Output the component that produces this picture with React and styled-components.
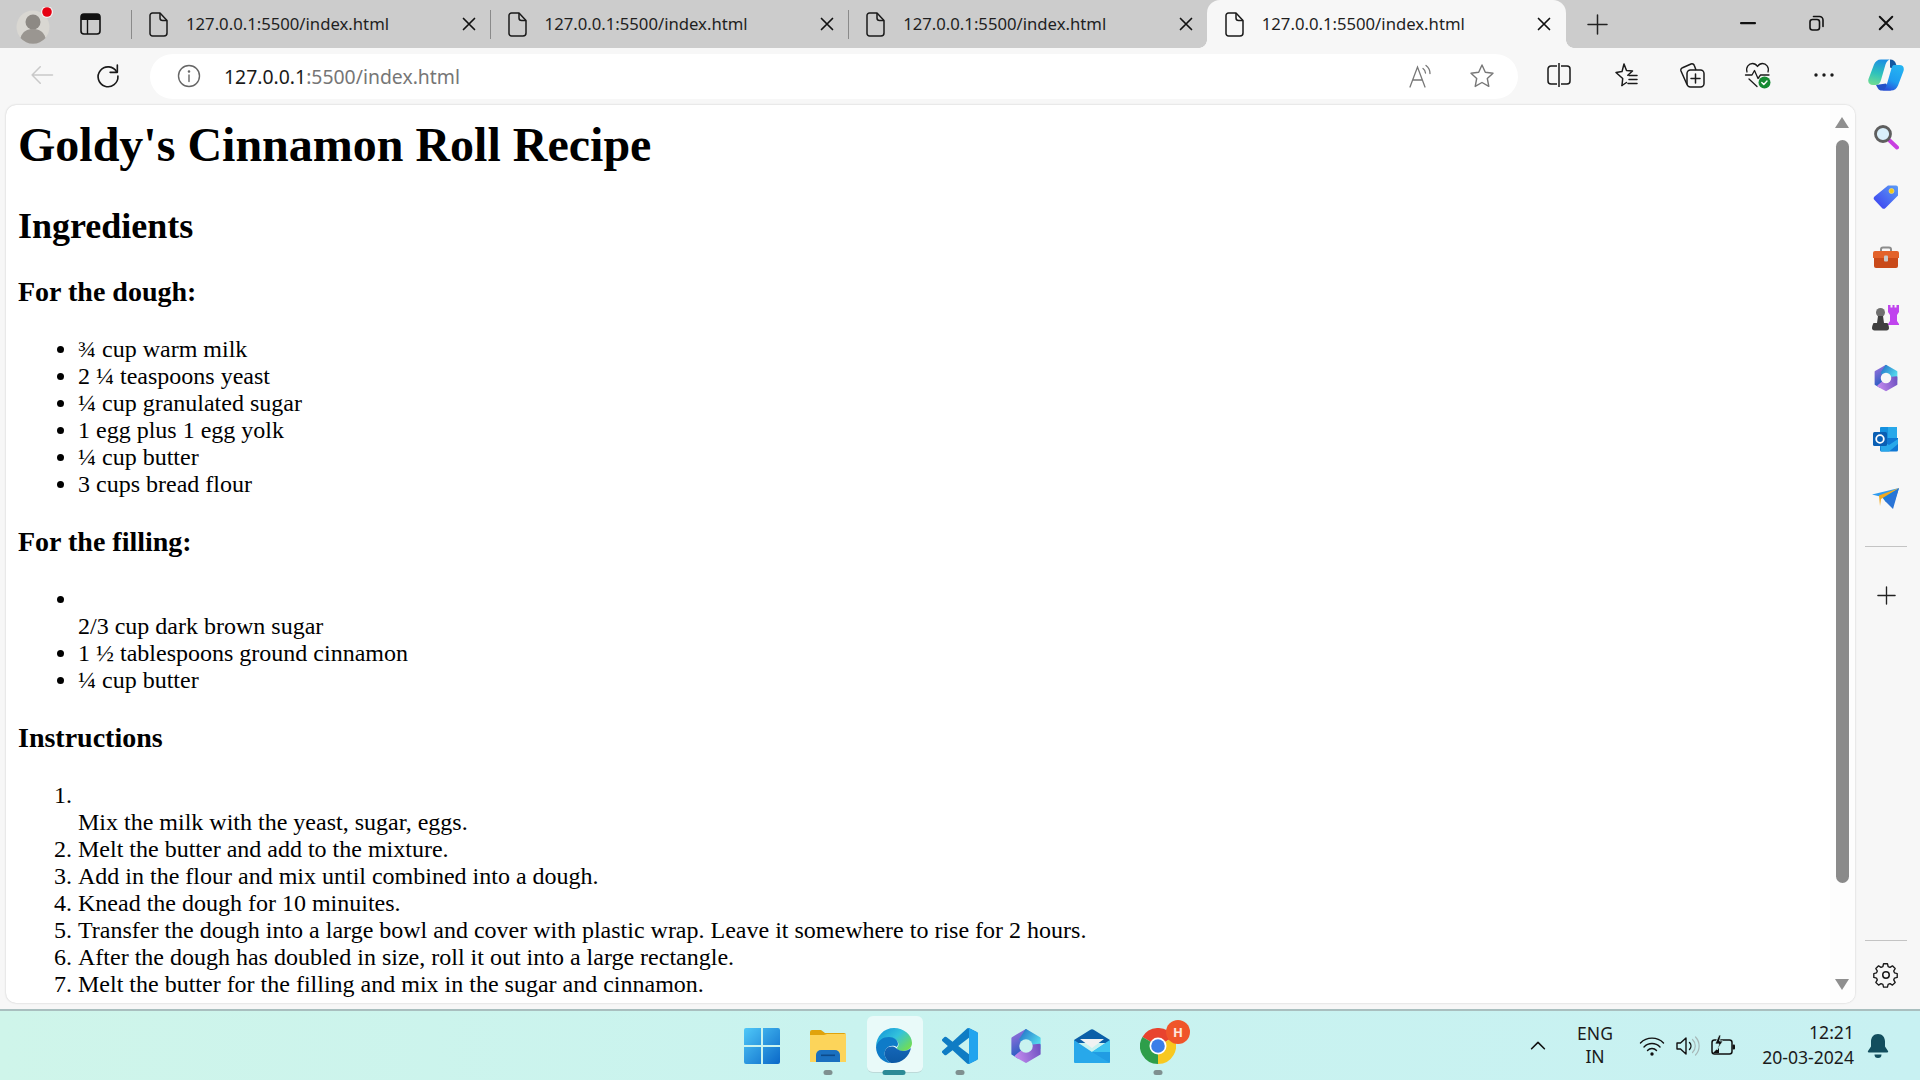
import React from 'react';
import styled, { createGlobalStyle, css } from 'styled-components';

const GlobalStyle = createGlobalStyle`
  html, body {
    margin: 0;
    padding: 0;
    width: 1920px;
    height: 1080px;
    overflow: hidden;
    background: #f7f7f7;
  }
`;

const uiFont = `"Noto Sans", "Open Sans", sans-serif`;

const Screen = styled.div`
  width: 1920px;
  height: 1080px;
  display: flex;
  flex-direction: column;
  overflow: hidden;
  font-family: ${uiFont};
`;

/* ---------- tab strip ---------- */

const TabStrip = styled.div`
  height: 48px;
  flex: none;
  background: #cccccc;
  display: flex;
  align-items: stretch;
`;

const ProfileSlot = styled.div`
  width: 50px;
  flex: none;
  padding: 7px 0 0 16px;
`;

const TabActionSlot = styled.div`
  width: 49px;
  flex: none;
  margin-right: 16px;
  display: flex;
  align-items: center;
  justify-content: center;
`;

const activeTab = css`
  background: #f7f7f7;
  border-radius: 13px 13px 0 0;

  &::before,
  &::after {
    content: '';
    position: absolute;
    bottom: 0;
    width: 8px;
    height: 8px;
  }

  &::before {
    left: -8px;
    background: radial-gradient(circle at 0 0, transparent 7.5px, #f7f7f7 8px);
  }

  &::after {
    right: -8px;
    background: radial-gradient(circle at 100% 0, transparent 7.5px, #f7f7f7 8px);
  }
`;

const Tab = styled.div`
  width: ${p => (p.$active ? 359 : 358.6)}px;
  flex: none;
  box-sizing: border-box;
  display: flex;
  align-items: center;
  padding: 0 ${p => (p.$active ? 15 : 14)}px 0 18px;
  color: #1f1f1f;
  position: relative;
  ${p => p.$active && activeTab}
`;

const TabDivider = styled.span`
  position: absolute;
  left: 0;
  top: 10px;
  height: 29px;
  width: 1px;
  background: #8a8a8a;
`;

const TabTitle = styled.span`
  margin-left: 18px;
  flex: 1;
  font-size: 16.7px;
  white-space: nowrap;
  padding-bottom: 2px;
`;

const NewTab = styled.div`
  width: 64px;
  flex: none;
  display: flex;
  align-items: center;
  justify-content: center;
`;

const WindowControls = styled.div`
  margin-left: auto;
  display: flex;
  align-items: center;
`;

const WindowButton = styled.div`
  width: 69px;
  display: flex;
  justify-content: center;
  align-items: center;
  padding-bottom: 2px;
`;

/* ---------- toolbar ---------- */

const Toolbar = styled.div`
  height: 57px;
  flex: none;
  background: #f7f7f7;
  display: flex;
  align-items: center;
  padding-bottom: 4px;
  box-sizing: border-box;
`;

const NavButton = styled.div`
  width: ${p => p.$w}px;
  margin-left: ${p => p.$ml || 0}px;
  flex: none;
  display: flex;
  justify-content: center;
  align-items: center;
`;

const AddressBar = styled.div`
  width: 1368px;
  height: 45px;
  flex: none;
  margin-left: 17px;
  margin-top: 3px;
  background: #ffffff;
  border-radius: 23px;
  display: flex;
  align-items: center;
  padding: 0 6px 0 27px;
  box-sizing: border-box;
`;

const Url = styled.div`
  margin-left: 23px;
  flex: 1;
  font-size: 19.4px;
  color: #767676;
  white-space: nowrap;
`;

const UrlHost = styled.span`
  color: #1a1a1a;
`;

const AddressAction = styled.div`
  width: 61px;
  display: flex;
  justify-content: center;
  align-items: center;
`;

/* ---------- main area ---------- */

const Main = styled.div`
  flex: 1;
  min-height: 0;
  display: flex;
  background: #f7f7f7;
`;

const Viewport = styled.div`
  width: 1849px;
  height: 898px;
  margin-left: 6px;
  flex: none;
  display: flex;
  background: #ffffff;
  border-radius: 10px;
  box-shadow: 0 0 2px rgba(0, 0, 0, 0.22);
  overflow: hidden;
`;

const Page = styled.main`
  flex: 1;
  min-width: 0;
  padding: 12px 12px 0;
  font-family: "Liberation Serif", "Times New Roman", serif;
  color: #000000;
  overflow: hidden;
`;

const Title = styled.h1`
  margin: 0 0 34px;
  font-size: 48px;
  line-height: 55px;
  font-weight: 700;
`;

const Heading = styled.h2`
  margin: 0 0 29px;
  font-size: 36px;
  line-height: 41px;
  font-weight: 700;
`;

const SubHeading = styled.h3`
  margin: 0 0 28px;
  font-size: 28px;
  line-height: 32px;
  font-weight: 700;
`;

const BulletList = styled.ul`
  margin: 0 0 28px;
  padding-left: 60px;
  font-size: 24px;
  line-height: 27px;
`;

const StepList = styled.ol`
  margin: 0;
  padding-left: 60px;
  font-size: 24px;
  line-height: 27px;
  white-space: nowrap;
`;

const ScrollTrack = styled.div`
  width: 25px;
  flex: none;
  background: #fdfdfd;
  display: flex;
  flex-direction: column;
  align-items: center;
  padding: 12px 6px 12px 5px;
  box-sizing: border-box;
`;

const ScrollThumb = styled.div`
  width: 13px;
  height: 743px;
  margin: 12px 0 96px;
  border-radius: 7px;
  background: #8a8a8a;
  flex: none;
`;

const ScrollArrow = styled.div`
  width: 0;
  height: 0;
  flex: none;
  border-left: 7px solid transparent;
  border-right: 7px solid transparent;
  border-bottom: ${p => (p.$down ? '0' : '11px solid #8f8f8f')};
  border-top: ${p => (p.$down ? '11px solid #8f8f8f' : '0')};
`;

/* ---------- sidebar ---------- */

const Sidebar = styled.aside`
  width: 65px;
  flex: none;
  display: flex;
  flex-direction: column;
  align-items: center;
  padding: 2px 3px 4px 0;
  box-sizing: border-box;
`;

const SideSlot = styled.div`
  height: 60.3px;
  flex: none;
  display: flex;
  align-items: center;
  justify-content: center;
`;

const SideRule = styled.div`
  width: 42px;
  height: 1px;
  flex: none;
  background: #c4c4c4;
  margin: ${p => p.$m};
`;

const SideSpacer = styled.div`
  flex: 1;
`;

/* ---------- taskbar ---------- */

const Taskbar = styled.footer`
  height: 71px;
  flex: none;
  box-sizing: border-box;
  border-top: 2px solid #a9bfbf;
  background: linear-gradient(90deg, #cff5ea 0%, #c9f3ef 45%, #c8f1f2 100%);
  display: grid;
  grid-template-columns: 1fr auto 1fr;
  align-items: center;
`;

const TaskIcons = styled.div`
  grid-column: 2;
  display: flex;
  height: 100%;
`;

const TaskSlot = styled.div`
  width: 66px;
  position: relative;
  isolation: isolate;
  display: flex;
  justify-content: center;
  align-items: center;
`;

const ActiveBox = styled.div`
  position: absolute;
  z-index: -1;
  left: 6px;
  top: 5px;
  width: 56px;
  height: 57px;
  box-sizing: border-box;
  border-radius: 6px;
  background: rgba(255, 255, 255, 0.6);
  border-bottom: 1px solid rgba(120, 170, 170, 0.4);
`;

const RunDot = styled.div`
  position: absolute;
  bottom: 5px;
  left: 50%;
  transform: translateX(-50%);
  height: 5px;
  border-radius: 3px;
  width: ${p => (p.$active ? 23 : 9)}px;
  background: ${p => (p.$active ? '#2b8a96' : '#7f9090')};
`;

const Badge = styled.div`
  position: absolute;
  top: 9px;
  left: 41px;
  width: 24px;
  height: 24px;
  border-radius: 50%;
  background: #f0552a;
  color: #ffe6dc;
  font-size: 13px;
  font-weight: 700;
  display: flex;
  align-items: center;
  justify-content: center;
`;

const Tray = styled.div`
  grid-column: 3;
  display: flex;
  align-items: center;
  justify-content: flex-end;
  color: #1b1b1b;
  padding-right: 31px;
`;

const LangBlock = styled.div`
  width: 70px;
  margin-left: 11px;
  margin-bottom: 2px;
  text-align: center;
  font-size: 17.5px;
  line-height: 23px;
`;

const TrayIcon = styled.div`
  width: ${p => p.$w}px;
  display: flex;
  justify-content: center;
`;

const Clock = styled.div`
  width: 110px;
  margin-bottom: 1px;
  text-align: right;
  font-size: 17.6px;
  line-height: 25px;
  white-space: nowrap;
`;

const BellWrap = styled.div`
  margin-left: 13px;
  display: flex;
`;

/* ---------- icons ---------- */

const Line = ({ size = 24, children, color = '#1a1a1a', sw = 1.6 }) => (
  <svg width={size} height={size} viewBox="0 0 24 24" fill="none" stroke={color} strokeWidth={sw} strokeLinecap="round" strokeLinejoin="round">
    {children}
  </svg>
);

const Avatar = () => (
  <svg width="42" height="40" viewBox="0 0 42 40">
    <circle cx="17" cy="20" r="16.5" fill="#d9d7d2" />
    <circle cx="17" cy="15" r="7.5" fill="#8d8984" />
    <path d="M4.5 31c2-7 7-9 12.5-9s10.500 2 12.500 9a16.500 16.500 0 0 1-25 0z" fill="#9a9691" />
    <circle cx="31" cy="5" r="6" fill="#f2f2f2" />
    <circle cx="31" cy="5" r="4.800" fill="#e60012" />
  </svg>
);

const TabActionsIcon = () => (
  <svg width="21" height="22" viewBox="0 0 21 22">
    <rect x="1" y="1" width="19" height="20" rx="3" fill="none" stroke="#111" strokeWidth="1.6" />
    <path d="M1 4a3 3 0 0 1 3-3h13a3 3 0 0 1 3 3v3H1z" fill="#111" />
    <path d="M7.500 7v14" stroke="#111" strokeWidth="1.4" />
  </svg>
);

const FileIcon = () => (
  <svg width="19" height="25" viewBox="0 0 19 25" fill="none" stroke="#1a1a1a" strokeWidth="1.500" strokeLinejoin="round">
    <path d="M3.500 1h7.500l7 7.500V21a3 3 0 0 1-3 3H3.500a2.500 2.500 0 0 1-2.500-2.500v-18A2.500 2.500 0 0 1 3.500 1z" />
    <path d="M11 1v5a2.500 2.500 0 0 0 2.500 2.500H18" />
  </svg>
);

const CloseIcon = ({ size = 14, sw = 1.7 }) => (
  <svg width={size} height={size} viewBox="0 0 14 14" stroke="#111" strokeWidth={sw} strokeLinecap="round">
    <path d="M1.500 1.500l11 11M12.500 1.500l-11 11" />
  </svg>
);

const PlusIcon = ({ size = 21 }) => (
  <svg width={size} height={size} viewBox="0 0 21 21" stroke="#222" strokeWidth="1.500" strokeLinecap="round">
    <path d="M10.500 1v19M1 10.500h19" />
  </svg>
);

const MinimizeIcon = () => (
  <svg width="16" height="3" viewBox="0 0 16 3"><rect width="16" height="2.200" rx="1" fill="#111" /></svg>
);

const RestoreIcon = () => (
  <svg width="15" height="16" viewBox="0 0 15 16" fill="none" stroke="#111" strokeWidth="1.600">
    <rect x="1" y="4.500" width="9.500" height="10.500" rx="2.500" />
    <path d="M4.500 1.500h6a3.500 3.500 0 0 1 3.500 3.500v6.500" strokeLinecap="round" />
  </svg>
);

const BackIcon = () => (
  <Line size={28} color="#c9c9c9" sw={1.300}>
    <path d="M21 12H3.500M10.500 5l-7 7 7 7" />
  </Line>
);

const RefreshIcon = () => (
  <Line size={28} color="#1a1a1a" sw={1.400}>
    <path d="M19.500 9.500A8.500 8.500 0 1 0 20.500 13" />
    <path d="M20 3.500v6.200h-6.200" />
  </Line>
);

const InfoIcon = () => (
  <svg width="24" height="24" viewBox="0 0 24 24" fill="none" stroke="#666" strokeWidth="1.400">
    <circle cx="12" cy="12" r="10.500" />
    <path d="M12 11v6.500" strokeLinecap="round" />
    <circle cx="12" cy="7.500" r="0.600" fill="#666" />
  </svg>
);

const ReadAloudIcon = () => (
  <svg width="26" height="26" viewBox="0 0 26 26" fill="none" stroke="#777" strokeWidth="1.300" strokeLinecap="round">
    <path d="M2 24L9.500 4l7.500 20M5 17h9" />
    <path d="M15 5.500a6 6 0 0 1 2.500 4.500M18 2.500a10 10 0 0 1 4 8" />
  </svg>
);

const StarIcon = () => (
  <svg width="26" height="26" viewBox="0 0 26 26" fill="none" stroke="#777" strokeWidth="1.400" strokeLinejoin="round">
    <path d="M13 2l3.300 7.300 7.700.9-5.700 5.300 1.500 7.900L13 19.500l-6.800 3.900 1.500-7.900L2 10.200l7.700-.9z" />
  </svg>
);

const SplitIcon = () => (
  <svg width="24" height="26" viewBox="0 0 24 26" fill="none" stroke="#1a1a1a" strokeWidth="1.500">
    <path d="M10 4H4a3 3 0 0 0-3 3v12a3 3 0 0 0 3 3h6M14 4h6a3 3 0 0 1 3 3v12a3 3 0 0 1-3 3h-6" />
    <path d="M12 1v24" />
  </svg>
);

const FavoritesIcon = () => (
  <svg width="26" height="26" viewBox="0 0 26 26" fill="none" stroke="#1a1a1a" strokeWidth="1.500" strokeLinejoin="round" strokeLinecap="round">
    <path d="M11 2l2.500 6.500 6 .5-4.700 4.200M9 23.500l.7-7-6.700-6 6-.9L11 2" />
    <path d="M9 23.500l4.500-3M16 13.500h8M16 17.500h8M15 21.500h9" />
  </svg>
);

const CollectionsIcon = () => (
  <svg width="26" height="28" viewBox="0 0 26 28" fill="none" stroke="#1a1a1a" strokeWidth="1.500" strokeLinejoin="round">
    <rect x="8" y="9" width="17" height="17" rx="3.500" />
    <path d="M16.500 13v9M12 17.500h9" strokeLinecap="round" />
    <path d="M8 23.500L2 10a2.500 2.500 0 0 1 1.500-3.300L12 3a2.500 2.500 0 0 1 3.300 1.500L17 9" />
  </svg>
);

const HealthIcon = () => (
  <svg width="28" height="28" viewBox="0 0 28 28" fill="none" stroke="#1a1a1a" strokeWidth="1.300" strokeLinejoin="round" strokeLinecap="round">
    <path d="M3 11C1.500 6 5 2.500 8.500 2.500c2.500 0 4 1.500 5 3 1-1.500 2.500-3 5-3C22 2.500 25.500 6 24 11" />
    <path d="M1.500 14H8l2.500-4.500 3.500 8 2.500-3.500H25" />
    <path d="M5 18l8 7.500" />
    <circle cx="20.500" cy="21.500" r="6" fill="#158a32" stroke="none" />
    <path d="M17.800 21.500l2 2 3.200-3.500" stroke="#fff" strokeWidth="1.400" />
  </svg>
);

const DotsIcon = () => (
  <svg width="20" height="4" viewBox="0 0 20 4" fill="#1a1a1a">
    <circle cx="2" cy="2" r="1.700" /><circle cx="10" cy="2" r="1.700" /><circle cx="18" cy="2" r="1.700" />
  </svg>
);

const CopilotIcon = () => (
  <svg width="36" height="32" viewBox="0 0 36 32">
    <defs>
      <linearGradient id="copA" x1="0.500" y1="0" x2="0.300" y2="1">
        <stop offset="0" stopColor="#1d8fe2" />
        <stop offset="0.550" stopColor="#2fc2bb" />
        <stop offset="1" stopColor="#6fdc92" />
      </linearGradient>
      <linearGradient id="copB" x1="0.700" y1="0" x2="0.300" y2="1">
        <stop offset="0" stopColor="#25b4f2" />
        <stop offset="0.600" stopColor="#1e9cf0" />
        <stop offset="1" stopColor="#2a4fd8" />
      </linearGradient>
    </defs>
    <path d="M22 .5c3.500 0 5 1.500 6 4.500l2 6.500-8-3z" fill="#14579f" />
    <path d="M13 .5h10c-3 0-4.500 2-5.500 5L13 21c-1 3.500-2.500 5-5.500 5H5C1.500 26-.5 23.500.5 20L6 5.500C7.200 2.500 9.500.5 13 .5z" fill="url(#copA)" />
    <path d="M8 26l2 3.500c1 1.500 2 2 3.500 2H23l-5-7z" fill="#2450c8" />
    <path d="M26 6h5.500c3.500 0 5 2.500 4 6L30 26.500c-1.200 3-3.500 5-7 5H13c3 0 4.500-2 5.500-5L23 11c1-3.500 1.500-5 3-5z" fill="url(#copB)" />
  </svg>
);

const SearchSideIcon = () => (
  <svg width="26" height="26" viewBox="0 0 26 26">
    <path d="M15 15l9 8.500" stroke="#c83fe0" strokeWidth="4" strokeLinecap="round" />
    <circle cx="10" cy="10" r="7.500" fill="#d9effb" stroke="#5e5e5e" strokeWidth="2.800" />
  </svg>
);

const TagIcon = () => (
  <svg width="26" height="26" viewBox="0 0 26 26">
    <defs>
      <linearGradient id="tagG" x1="1" y1="0" x2="0" y2="1">
        <stop offset="0" stopColor="#5b9df5" />
        <stop offset="1" stopColor="#3b3cf0" />
      </linearGradient>
    </defs>
    <path d="M15 1.500h8a2 2 0 0 1 2 2v8L12.500 24a2.500 2.500 0 0 1-3.500 0L1.500 16a2.500 2.500 0 0 1 0-3.500z" fill="url(#tagG)" />
    <circle cx="18.500" cy="7" r="2.500" fill="#f3c915" stroke="#ecd97a" strokeWidth="0.800" />
  </svg>
);

const ToolboxIcon = () => (
  <svg width="28" height="24" viewBox="0 0 28 24">
    <path d="M9 6V3.500A2 2 0 0 1 11 1.500h6a2 2 0 0 1 2 2V6" fill="none" stroke="#8c8c8c" strokeWidth="2" />
    <path d="M1 7a2 2 0 0 1 2-2h22a2 2 0 0 1 2 2v5H1z" fill="#e3622a" />
    <path d="M2 12h24v8a2 2 0 0 1-2 2H4a2 2 0 0 1-2-2z" fill="#c94a1a" />
    <rect x="12" y="9.500" width="4" height="6" rx="1" fill="#c9c9c9" />
  </svg>
);

const ChessIcon = () => (
  <svg width="28" height="28" viewBox="0 0 28 28">
    <path d="M16 1h2.500v2.500h2V1h2v2.500h2V1h2.500v7l-2 3v6l2 3v1H16v-1l2-3v-6l-2-3z" fill="#c044ee" />
    <circle cx="8.500" cy="8.500" r="4.500" fill="#6f6f6f" />
    <path d="M6 12h5l1 7h3.500c1 2 1.500 3.500 1.500 5.500a2.500 2.500 0 0 1-2.500 2H2.500A2.500 2.500 0 0 1 0 24.500c0-2 .5-3.500 1.500-5.500H5z" fill="#3f3f3f" />
  </svg>
);

const M365Icon = ({ id, size, hole }) => (
  <svg width={size} height={size} viewBox="0 0 32 32" strokeWidth="2" strokeLinejoin="round">
    <defs>
      <linearGradient id={`${id}a`} x1="0.200" y1="0" x2="0.500" y2="1">
        <stop offset="0" stopColor="#9a70dc" />
        <stop offset="1" stopColor="#1f5cc0" />
      </linearGradient>
      <linearGradient id={`${id}b`} x1="0" y1="0" x2="1" y2="0.700">
        <stop offset="0" stopColor="#2272c8" />
        <stop offset="1" stopColor="#56dcee" />
      </linearGradient>
      <linearGradient id={`${id}c`} x1="0" y1="0.500" x2="1" y2="0.300">
        <stop offset="0" stopColor="#c088ec" />
        <stop offset="1" stopColor="#7455c4" />
      </linearGradient>
    </defs>
    <path d="M16 2L4 9v14l5 3 7-10z" fill={`url(#${id}a)`} stroke={`url(#${id}a)`} />
    <path d="M16 2l12 7v9l-12-2-5-6z" fill={`url(#${id}b)`} stroke={`url(#${id}b)`} />
    <path d="M7 25l9 5 12-7v-8l-10 1z" fill={`url(#${id}c)`} stroke={`url(#${id}c)`} />
    <circle cx="16" cy="16" r="6" fill={hole} />
  </svg>
);

const OutlookIcon = () => (
  <svg width="26" height="26" viewBox="0 0 26 26">
    <rect x="7" y="1" width="17" height="12" rx="1" fill="#1490df" />
    <rect x="15" y="1" width="9" height="12" fill="#28a8ea" />
    <path d="M7 12h18v12a1.500 1.500 0 0 1-1.500 1.500H8.500A1.500 1.500 0 0 1 7 24z" fill="#0f78d4" />
    <path d="M7 13l9 6 9-6v5l-9 7.500H8z" fill="#28a8ea" />
    <rect x="0" y="6" width="14" height="14" rx="1.500" fill="#0a5fb4" />
    <circle cx="7" cy="13" r="3.800" fill="none" stroke="#fff" strokeWidth="1.800" />
  </svg>
);

const SendIcon = () => (
  <svg width="28" height="22" viewBox="0 0 28 22">
    <path d="M0 6.500L27 0 10 9z" fill="#2f9bf0" />
    <path d="M10 9L27 0l-6 18-8-5z" fill="#1c7cd8" />
    <path d="M7 7.500L27 0 9 11l-1 7z" fill="#f1a91f" />
    <path d="M27 0L13 13l8 8z" fill="#2a74d6" />
  </svg>
);

const GearIcon = () => (
  <svg width="26" height="26" viewBox="0 0 24 24" fill="none" stroke="#1a1a1a" strokeWidth="1.400" strokeLinejoin="round">
    <path d="M10 1.500h4l.7 2.800 1.900.8 2.500-1.500 2.800 2.800-1.500 2.500.8 1.900 2.800.7v4l-2.800.7-.8 1.900 1.500 2.500-2.800 2.800-2.500-1.500-1.900.8-.7 2.800h-4l-.7-2.800-1.900-.8-2.500 1.500-2.800-2.800 1.500-2.500-.8-1.900-2.800-.7v-4l2.800-.7.8-1.900-1.500-2.500 2.800-2.800 2.500 1.500 1.900-.8z" transform="translate(12 12) scale(.9) translate(-12.500 -13)" />
    <circle cx="12" cy="12" r="3" />
  </svg>
);

const WindowsIcon = () => (
  <svg width="36" height="36" viewBox="0 0 36 36">
    <defs>
      <linearGradient id="winG" x1="0" y1="0" x2="1" y2="1">
        <stop offset="0" stopColor="#4fc8f8" />
        <stop offset="1" stopColor="#0a68c8" />
      </linearGradient>
    </defs>
    <path d="M2 0h15v17H0V2a2 2 0 0 1 2-2zM19 0h15a2 2 0 0 1 2 2v15H19zM0 19h17v17H2a2 2 0 0 1-2-2zM19 19h17v15a2 2 0 0 1-2 2H19z" fill="url(#winG)" />
  </svg>
);

const FolderIcon = () => (
  <svg width="36" height="32" viewBox="0 0 36 32">
    <path d="M0 2a2 2 0 0 1 2-2h9l4 3h19a2 2 0 0 1 2 2v4H0z" fill="#e0a30c" />
    <path d="M0 5h14l3-1h19v28H0z" fill="#fcd45a" />
    <path d="M6 32v-7a5 5 0 0 1 5-5h14a5 5 0 0 1 5 5v7z" fill="#1a70c0" />
    <rect x="11" y="24.500" width="14" height="1.600" fill="#0c4a8a" />
  </svg>
);

const EdgeIcon = () => (
  <svg width="36" height="36" viewBox="0 0 36 36">
    <defs>
      <linearGradient id="edgeA" x1="0" y1="0" x2="1" y2="0.700">
        <stop offset="0" stopColor="#0f8fd8" />
        <stop offset="0.550" stopColor="#33c2dc" />
        <stop offset="1" stopColor="#6fdc5a" />
      </linearGradient>
      <linearGradient id="edgeB" x1="0" y1="0" x2="0" y2="1">
        <stop offset="0" stopColor="#1466b8" />
        <stop offset="1" stopColor="#0c59a4" />
      </linearGradient>
    </defs>
    <path d="M18 0c10 0 18 7 18 15 0 5-4 8-9 8-3 0-6-1-6-3 0-1 1.500-1.500 1.500-3.500C22.500 13 19 10 14 10 8 10 3 14 0 19 0 8 8 0 18 0z" fill="url(#edgeA)" />
    <path d="M0 19c2-7 7-10 13-10 5 0 9 3 9 7 0 1.500-1 2-1 3-3-2-8-2-11 2-3 4-1 11 5 14C7 35 0 28 0 19z" fill="#0e7bc8" />
    <path d="M15 35c-6-3-8-10-5-14 3-3 7-3 10-1 2 2 5 3 7 3 3 0 6-1 8-3-2 9-10 16-20 15z" fill="url(#edgeB)" />
  </svg>
);

const VsCodeIcon = () => (
  <svg width="36" height="36" viewBox="0 0 100 100">
    <path d="M96.500 10.800 75.900.9a6.200 6.200 0 0 0-7.100 1.200L29.400 38.100 12.200 25a4.200 4.200 0 0 0-5.300.2l-5.500 5.100a4.200 4.200 0 0 0 0 6.200L16.300 50 1.400 63.500a4.200 4.200 0 0 0 0 6.200l5.500 5a4.200 4.200 0 0 0 5.300.2l17.200-13 39.400 35.900a6.200 6.200 0 0 0 7.100 1.200l20.600-9.900a6.200 6.200 0 0 0 3.500-5.600V16.400a6.200 6.200 0 0 0-3.500-5.600zM75 72.700 45.100 50 75 27.300z" fill="#0f7cc4" />
    <path d="M75.900 99.100a6.200 6.200 0 0 1-7.100-1.200C72 101 75 99 75 95V5c0-4-3-6-6.200-2.900A6.200 6.200 0 0 1 75.900.9l20.600 9.900a6.200 6.200 0 0 1 3.500 5.600v67.200a6.200 6.200 0 0 1-3.500 5.600z" fill="#22a4ee" />
  </svg>
);

const MailIcon = () => (
  <svg width="36" height="34" viewBox="0 0 36 34">
    <path d="M16 1a3.500 3.500 0 0 1 4 0L36 11v3H0v-3z" fill="#0a5fa8" />
    <path d="M6 10h24l-12 9z" fill="#f2f2f2" />
    <path d="M0 11l18 12 18-12v22a1 1 0 0 1-1 1H1a1 1 0 0 1-1-1z" fill="#28a8ea" />
    <path d="M18 23l18-12v12z" fill="#3ec4f0" />
    <path d="M18 23l18 11H36V23z" fill="#1a8fdc" opacity="0.500" />
  </svg>
);

const ChromeIcon = () => (
  <svg width="36" height="36" viewBox="0 0 36 36">
    <path d="M18 18L2.400 9A18 18 0 0 1 33.600 9z" fill="#e8432e" />
    <path d="M18 18L18 36A18 18 0 0 1 2.400 9z" fill="#2e9e4a" />
    <path d="M18 18L33.600 9A18 18 0 0 1 18 36z" fill="#f8c820" />
    <circle cx="18" cy="18" r="8.500" fill="#ffffff" />
    <circle cx="18" cy="18" r="6.800" fill="#3a7ee8" />
  </svg>
);

const WifiIcon = () => (
  <svg width="26" height="22" viewBox="0 0 26 22" fill="none" stroke="#111" strokeWidth="1.400" strokeLinecap="round">
    <path d="M1.500 8a16 16 0 0 1 23 0M5 12a11 11 0 0 1 16 0M8.500 15.500a6 6 0 0 1 9 0" />
    <circle cx="13" cy="19" r="1.700" fill="#111" stroke="none" />
  </svg>
);

const SpeakerIcon = () => (
  <svg width="26" height="22" viewBox="0 0 26 22" fill="none" strokeLinecap="round" strokeLinejoin="round">
    <path d="M1 8v6h3.500L10 19V3L4.500 8z" stroke="#111" strokeWidth="1.400" />
    <path d="M13.500 7.500a5 5 0 0 1 0 7" stroke="#111" strokeWidth="1.400" />
    <path d="M16.500 4.500a9 9 0 0 1 0 13M19.500 2a13 13 0 0 1 0 18" stroke="#a7b8b8" strokeWidth="1.200" />
  </svg>
);

const BatteryIcon = () => (
  <svg width="26" height="22" viewBox="0 0 26 22">
    <rect x="1" y="5" width="20" height="14" rx="2.500" fill="none" stroke="#111" strokeWidth="1.500" />
    <rect x="21.500" y="9.500" width="2.500" height="5" rx="1" fill="#111" />
    <path d="M2 18l6-6v6z" fill="#111" />
    <path d="M8 0L4 9h4l-2 6 6-9H8.500L10 0z" fill="#111" stroke="#c9f2f1" strokeWidth="0.800" />
  </svg>
);

const BellIcon = () => (
  <svg width="22" height="26" viewBox="0 0 22 26" fill="#134e5e">
    <path d="M11 1c4.500 0 7 3.500 7 7.500v5l3 4.500a1 1 0 0 1-.8 1.500H1.800A1 1 0 0 1 1 18l3-4.500v-5C4 4.500 6.500 1 11 1z" />
    <path d="M7.500 21.500h7a3.500 3.500 0 0 1-7 0z" />
  </svg>
);

const tabs = [false, false, false, true];
const doughItems = ['¾ cup warm milk', '2 ¼ teaspoons yeast', '¼ cup granulated sugar', '1 egg plus 1 egg yolk', '¼ cup butter', '3 cups bread flour'];
const steps = [
  'Melt the butter and add to the mixture.',
  'Add in the flour and mix until combined into a dough.',
  'Knead the dough for 10 minuites.',
  'Transfer the dough into a large bowl and cover with plastic wrap. Leave it somewhere to rise for 2 hours.',
  'After the dough has doubled in size, roll it out into a large rectangle.',
  'Melt the butter for the filling and mix in the sugar and cinnamon.',
];

const App = () => (
  <Screen>
    <GlobalStyle />
    <TabStrip>
      <ProfileSlot><Avatar /></ProfileSlot>
      <TabActionSlot><TabActionsIcon /></TabActionSlot>
      {tabs.map((active, i) => (
        <Tab key={i} $active={active}>
          {!active && <TabDivider />}
          <FileIcon />
          <TabTitle>127.0.0.1:5500/index.html</TabTitle>
          <CloseIcon />
        </Tab>
      ))}
      <NewTab><PlusIcon /></NewTab>
      <WindowControls>
        <WindowButton><MinimizeIcon /></WindowButton>
        <WindowButton><RestoreIcon /></WindowButton>
        <WindowButton><CloseIcon size={16} /></WindowButton>
      </WindowControls>
    </TabStrip>

    <Toolbar>
      <NavButton $w={83}><BackIcon /></NavButton>
      <NavButton $w={50}><RefreshIcon /></NavButton>
      <AddressBar>
        <InfoIcon />
        <Url><UrlHost>127.0.0.1</UrlHost>:5500/index.html</Url>
        <AddressAction><ReadAloudIcon /></AddressAction>
        <AddressAction><StarIcon /></AddressAction>
      </AddressBar>
      <NavButton $w={68} $ml={7}><SplitIcon /></NavButton>
      <NavButton $w={66}><FavoritesIcon /></NavButton>
      <NavButton $w={66}><CollectionsIcon /></NavButton>
      <NavButton $w={66}><HealthIcon /></NavButton>
      <NavButton $w={65}><DotsIcon /></NavButton>
      <NavButton $w={59}><CopilotIcon /></NavButton>
    </Toolbar>

    <Main>
      <Viewport>
        <Page>
          <Title>Goldy's Cinnamon Roll Recipe</Title>
          <Heading>Ingredients</Heading>
          <SubHeading>For the dough:</SubHeading>
          <BulletList>
            {doughItems.map(item => <li key={item}>{item}</li>)}
          </BulletList>
          <SubHeading>For the filling:</SubHeading>
          <BulletList>
            <li><br />2/3 cup dark brown sugar</li>
            <li>1 ½ tablespoons ground cinnamon</li>
            <li>¼ cup butter</li>
          </BulletList>
          <SubHeading>Instructions</SubHeading>
          <StepList>
            <li><br />Mix the milk with the yeast, sugar, eggs.</li>
            {steps.map(step => <li key={step}>{step}</li>)}
          </StepList>
        </Page>
        <ScrollTrack>
          <ScrollArrow />
          <ScrollThumb />
          <ScrollArrow $down />
        </ScrollTrack>
      </Viewport>
      <Sidebar>
        <SideSlot><SearchSideIcon /></SideSlot>
        <SideSlot><TagIcon /></SideSlot>
        <SideSlot><ToolboxIcon /></SideSlot>
        <SideSlot><ChessIcon /></SideSlot>
        <SideSlot><M365Icon id="sideM" size={28} hole="#f7f7f7" /></SideSlot>
        <SideSlot><OutlookIcon /></SideSlot>
        <SideSlot><SendIcon /></SideSlot>
        <SideRule $m="17px 0 18px" />
        <SideSlot><PlusIcon size={19} /></SideSlot>
        <SideSpacer />
        <SideRule $m="0 0 4px" />
        <SideSlot><GearIcon /></SideSlot>
      </Sidebar>
    </Main>

    <Taskbar>
      <TaskIcons>
        <TaskSlot><WindowsIcon /></TaskSlot>
        <TaskSlot><FolderIcon /><RunDot /></TaskSlot>
        <TaskSlot><ActiveBox /><EdgeIcon /><RunDot $active /></TaskSlot>
        <TaskSlot><VsCodeIcon /><RunDot /></TaskSlot>
        <TaskSlot><M365Icon id="barM" size={36} hole="#c9f3ef" /></TaskSlot>
        <TaskSlot><MailIcon /></TaskSlot>
        <TaskSlot><ChromeIcon /><Badge>H</Badge><RunDot /></TaskSlot>
      </TaskIcons>
      <Tray>
        <Line size={22} color="#111" sw={1.700}><path d="M5 15l7-7 7 7" /></Line>
        <LangBlock>ENG<br />IN</LangBlock>
        <TrayIcon $w={44}><WifiIcon /></TrayIcon>
        <TrayIcon $w={30}><SpeakerIcon /></TrayIcon>
        <TrayIcon $w={40}><BatteryIcon /></TrayIcon>
        <Clock>12:21<br />20-03-2024</Clock>
        <BellWrap><BellIcon /></BellWrap>
      </Tray>
    </Taskbar>
  </Screen>
);

export default App;
